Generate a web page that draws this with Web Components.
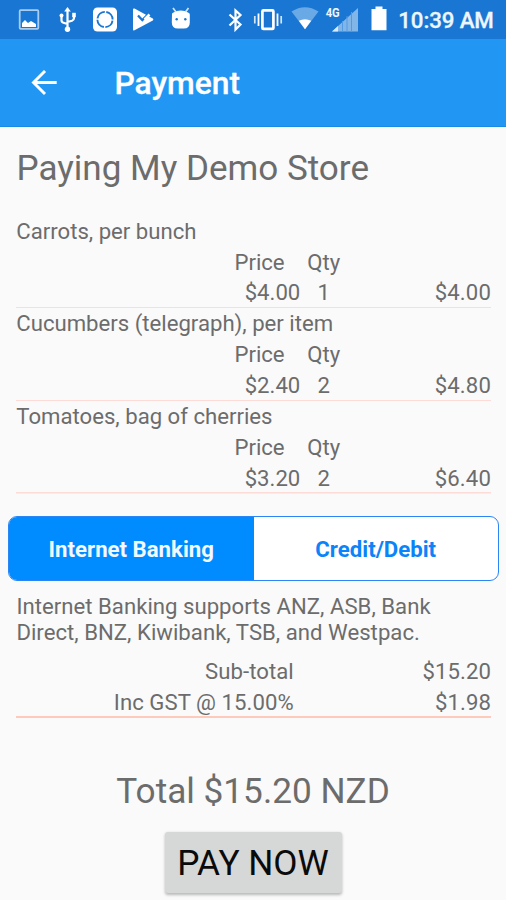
<!DOCTYPE html>
<html lang="en"><head><meta charset="utf-8"><title>Payment</title>
<style>
html,body{margin:0;padding:0}
body{width:506px;height:900px;overflow:hidden;background:#fafafa;font-family:Roboto,"Liberation Sans",sans-serif;color:#6c6c6c}
</style></head><body>
<payment-screen></payment-screen>
<script>
const define=(name,html,setup)=>customElements.define(name,class extends HTMLElement{
  connectedCallback(){
    if(this.shadowRoot)return;
    const t=document.createElement('template');t.innerHTML=html;
    this.attachShadow({mode:'open'}).append(t.content.cloneNode(true));
    if(setup)setup(this,this.shadowRoot);
  }
});

define('status-bar',`<style>
:host{display:block;height:39px;background:#1976d2;color:#fff}
svg{display:block;width:100%;height:39px}
text{font:500 22.3px Roboto,sans-serif;fill:#eef6fd}
.clock{stroke:#eef6fd;stroke-width:.3px}
.s{font-size:12.5px;font-weight:700}
</style>
<svg viewBox="0 0 506 39" fill="#fff">
<g><rect x="19.700" y="10.200" width="18.600" height="18.600" rx="1" fill="none" stroke="#a9cdf0" stroke-width="1.800"/><path d="M22 27v-4l3-3 3 3 3-2 5 3v3z"/></g>
<g fill="none" stroke="#fff" stroke-width="2.200"><path d="M67.500 11v18M61.500 16v4.200q0 2 2 2.500l4 1.300M74 16v2q0 2-2 2.700l-4.500 1.300"/></g><path d="M67.500 7l3.300 4.500h-6.600z"/><circle cx="61.500" cy="15.500" r="2"/><rect x="72.200" y="12.800" width="3.600" height="4.400"/><circle cx="67.500" cy="29.200" r="2.700"/>
<rect x="93" y="7.500" width="24" height="24" rx="4.500"/><circle cx="105" cy="19.500" r="7.600" fill="none" stroke="#1976d2" stroke-width="1.900" stroke-dasharray="10.440 1.500" transform="rotate(8 105 19.500)"/>
<path d="M134.500 8.500q-1.500-.5-1.500 1v20q0 1.500 1.500.8l18.300-9.800q1.200-1 0-2z"/><path d="M138 15.500l4.300 4.500 7.500-7.500" fill="none" stroke="#1976d2" stroke-width="2.300"/><path d="M144.500 19.500l5-5" stroke="#fff" stroke-width="2.500"/><path d="M172 14q0-1 1-1.300 3.500-2.200 7.800-2.200t7.700 2.200q1.300.5 1.300 1.800v8q0 6-6 6h-6q-6 0-6-6z"/><path d="M173 8l3 4M188.500 8l-3 4" stroke="#d2e6f9" stroke-width="1.700"/><circle cx="176.700" cy="19.200" r="1.200" fill="#1976d2"/><circle cx="185.300" cy="19.200" r="1.200" fill="#1976d2"/>
<path d="M229.500 14.500l11 10-5 5v-19l5 4.500-11 10.500" fill="none" stroke="#fff" stroke-width="2.200"/>
<g fill="none" stroke="#fff"><rect x="262.400" y="10.400" width="11" height="18.500" rx="1" stroke-width="2.700"/><path d="M258.500 13.500v12.500M277.500 13.500v12.500" stroke-width="1.800"/><path d="M254.800 16v7.500M281.200 16v7.500" stroke-width="1.700" stroke="#d2e6f9"/></g>
<path d="M291.500 11.500q13.500-8.500 27 0l-13.500 17.700z" fill="#69a9e6"/><path d="M298.800 20.800q6.200-3.300 12.400 0l-6.200 8.400z"/>
<text class="s" x="325.700" y="17.300" textLength="14" lengthAdjust="spacingAndGlyphs">4G</text>
<path d="M358 8v23.500h-26z" fill="#83b6e8"/><path d="M332 31.500l6-5.500v5.500z" fill="#d8eafa"/><path d="M342.500 21v11M347 16v16M351.500 12v20" stroke="#529be0" stroke-width="1"/>
<path d="M371.500 9h4V6.500h7V9h4v21.300h-15z"/>
<text class="clock" x="398.300" y="28" textLength="95.500">10:39 AM</text>
</svg>`);

define('app-bar',`<style>
:host{display:flex;box-sizing:border-box;height:88px;padding:0 31px;gap:57.500px;align-items:center;background:#2196f3;color:#fff;border-bottom:1.500px solid #188be6}
svg{width:26px;height:26px}
h1{margin:0;font-size:31.800px;font-weight:500;line-height:38px;-webkit-text-stroke:.3px #fff}
</style>
<svg viewBox="0 0 26 26" fill="none" stroke="#fff" stroke-width="2.900"><path d="M25.700 12.500H3M14 1L2.500 12.500 14 24"/></svg><h1><slot></slot></h1>`);

define('line-item',`<style>
:host{display:grid;box-sizing:border-box;height:92.670px;grid-template-columns:284px 57px 1fr;grid-template-rows:31px 30.500px 31px;line-height:30.670px;background:linear-gradient(#fddcd7,#fddcd7) 0 100%/100% 1.500px no-repeat}
.n{grid-column:1/4}.p{grid-column:1;text-align:right}.q{grid-column:2;padding-left:17.300px}.h{padding-left:7px}.hp{padding-right:15.700px}.t{text-align:right}
.h{grid-column:2/4}.t{letter-spacing:.15px}
</style><span class="n"></span><span class="p hp">Price</span><span class="h">Qty</span><span class="p pv"></span><span class="q"></span><span class="t"></span>`,
(e,r)=>{const s=(c,a)=>r.querySelector(c).textContent=e.getAttribute(a);s('.n','name');s('.pv','price');s('.q','qty');s('.t','total')});

define('segment-control',`<style>
:host{display:flex;box-sizing:border-box;height:65px;margin:0 7px 0 8px;border:1.500px solid #2a86f5;border-radius:9px;overflow:hidden;background:#fff}
span{flex:1;display:flex;align-items:center;justify-content:center;padding-top:2px;font-size:22.200px;font-weight:700;color:#0a84f8}
.on{background:#008cff;color:#f2f9ff}
</style><span class="on">Internet Banking</span><span>Credit/Debit</span>`);

define('sum-row',`<style>
:host{display:grid;grid-template-columns:277.800px 1fr;height:30.700px;line-height:30.700px;text-align:right;letter-spacing:.06px}
</style><slot name="label"></slot><slot></slot>`);

define('pay-button',`<style>
:host{display:block;width:177px;margin:0 auto}
button{display:block;width:100%;height:61px;padding:1px 0 0;border:0;border-radius:3px;background:#d6d7d7;box-shadow:0 1.500px 3px #0004;color:#0a0a0a;font:400 35.200px/60px Roboto,sans-serif}
</style><button><slot></slot></button>`);

define('payment-screen',`<style>
:host{display:block;height:900px;background:#fafafa;font-size:22.150px}
h2{margin:0;padding:20px 16px 0 16.500px;font-size:35.050px;font-weight:400;line-height:42px}
.items{padding:26.700px 15px 0 16.300px}
segment-control{margin-top:22.300px}
p{margin:13.300px 16px 0 16.400px;line-height:25.300px;height:51.200px;white-space:pre-line;letter-spacing:.02px}
.sums{margin:11px 15px 0 16px;border-bottom:2px solid #fdcabb;height:59.500px}
.total{margin-top:52.500px;text-align:center;font-size:35.200px;line-height:42px}
pay-button{margin-top:19.500px}
</style>
<status-bar></status-bar><app-bar>Payment</app-bar>
<h2><span>Paying My Demo Store</span></h2>
<div class="items">
<line-item name="Carrots, per bunch" price="$4.00" qty="1" total="$4.00"></line-item>
<line-item name="Cucumbers (telegraph), per item" price="$2.40" qty="2" total="$4.80"></line-item>
<line-item name="Tomatoes, bag of cherries" price="$3.20" qty="2" total="$6.40"></line-item>
</div>
<segment-control></segment-control>
<p>Internet Banking supports ANZ, ASB, Bank
Direct, BNZ, Kiwibank, TSB, and Westpac.</p>
<div class="sums"><sum-row><span slot="label">Sub-total</span><span>$15.20</span></sum-row><sum-row><span slot="label">Inc GST @ 15.00%</span><span>$1.98</span></sum-row></div>
<div class="total">Total $15.20 NZD</div>
<pay-button>PAY NOW</pay-button>`);
</script></body></html>
